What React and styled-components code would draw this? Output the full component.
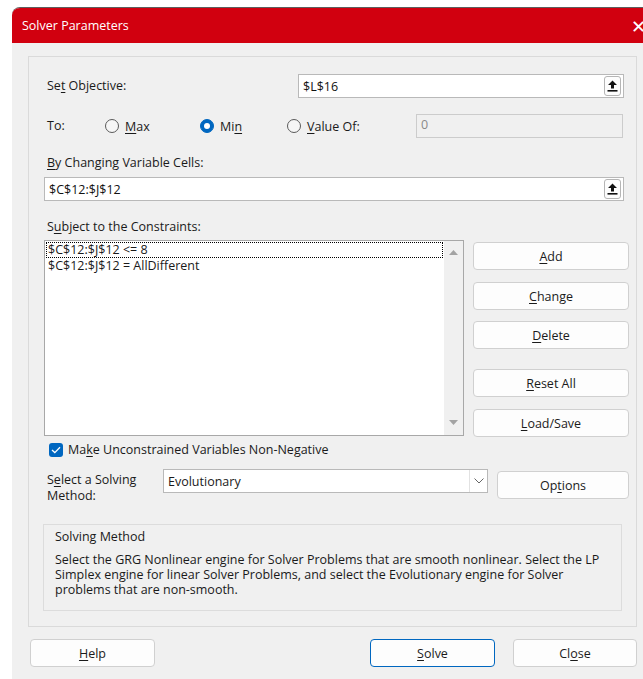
import React from "react";
import styled, { createGlobalStyle, css } from "styled-components";

const Global = createGlobalStyle`
  html, body { margin: 0; padding: 0; background: #ffffff; overflow: hidden; }
  body { font-family: "Open Sans", "Noto Sans", "Liberation Sans", sans-serif; font-size: 12.5px; color: #1a1a1a; }
  * { box-sizing: border-box; }
  u { text-decoration: underline; text-underline-offset: 2px; }
`;

const Page = styled.div`
  padding: 7px 0 0 12px;
  width: 643px;
  height: 679px;
`;

const Window = styled.div`
  width: 660px;
  height: 680px;
  border-top-left-radius: 8px;
  overflow: hidden;
  background: #f0f0f0;
  border-top: 1px solid #5e5e5e;
`;

const TitleBar = styled.div`
  height: 35px;
  background: #d1000f;
  display: flex;
  align-items: center;
  justify-content: space-between;
  padding: 0 10px 0 10px;
  color: #ffffff;
  font-size: 12.5px;
`;

const CloseGlyph = styled.span`
  font-size: 18px;
  font-weight: 300;
  margin-right: 16px;
  color: #ffffff;
`;

const Body = styled.div`
  padding: 13px 0 0 16px;
`;

const Frame = styled.div`
  width: 609px;
  height: 571px;
  border: 1px solid #dadada;
  padding: 0 7px 0 15px;
  display: flex;
  flex-direction: column;
`;

const Row = styled.div`
  display: flex;
  align-items: center;
  margin-top: ${(p) => p.$mt || 0}px;
  height: ${(p) => (p.$h ? `${p.$h}px` : "auto")};
`;

const Label = styled.div`
  padding-left: 3px;
  width: ${(p) => (p.$w ? `${p.$w}px` : "auto")};
  line-height: ${(p) => p.$lh || 16}px;
  padding-top: ${(p) => p.$pt || 0}px;
  flex-shrink: 0;
`;

const TextBox = styled.div`
  width: ${(p) => p.$w}px;
  height: 24px;
  border: 1px solid ${(p) => (p.$disabled ? "#cccccc" : "#b9b9b9")};
  background: ${(p) => (p.$disabled ? "#f0f0f0" : "#ffffff")};
  color: ${(p) => (p.$disabled ? "#8a8a8a" : "#111111")};
  display: flex;
  align-items: center;
  justify-content: space-between;
  padding: 0 2px 0 4px;
  ${(p) => p.$disabled && css`align-items: flex-start; padding-top: 1px;`}
`;

const RefButton = styled.div`
  width: 17px;
  height: 20px;
  border: 1px solid #b5b5b5;
  border-radius: 3px;
  background: #fdfdfd;
  display: flex;
  align-items: center;
  justify-content: center;
`;

const RadioGroup = styled.label`
  display: flex;
  align-items: center;
  gap: 6px;
  width: ${(p) => p.$w}px;
  flex-shrink: 0;
`;

const RadioDot = styled.span`
  width: 14px;
  height: 14px;
  border-radius: 50%;
  border: 1px solid #5a5a5a;
  background: #f6f6f6;
  display: flex;
  align-items: center;
  justify-content: center;
  ${(p) =>
    p.$on &&
    css`
      border-color: #0067c0;
      background: #0067c0;
      &::after {
        content: "";
        width: 6px;
        height: 6px;
        border-radius: 50%;
        background: #ffffff;
      }
    `}
`;

const ListRow = styled.div`
  display: flex;
  margin-top: 5px;
  gap: 9px;
`;

const ListBox = styled.div`
  width: 420px;
  height: 196px;
  border: 1px solid #a8a8a8;
  background: #ffffff;
  display: flex;
`;

const ListItems = styled.div`
  flex: 1;
  padding: 1px 1px 0 1px;
`;

const ListItem = styled.div`
  height: 16px;
  line-height: 14px;
  padding-left: 1px;
  border: 1px ${(p) => (p.$focus ? "dotted #000000" : "solid transparent")};
`;

const ScrollBar = styled.div`
  width: 19px;
  background: #f0f0f0;
  display: flex;
  flex-direction: column;
  justify-content: space-between;
  align-items: center;
  padding: 9px 0 10px;
`;

const ButtonColumn = styled.div`
  display: flex;
  flex-direction: column;
  padding-top: 2px;
`;

const Btn = styled.div`
  width: ${(p) => p.$w || 156}px;
  height: 28px;
  margin-top: ${(p) => p.$mt || 0}px;
  margin-left: ${(p) => p.$ml || 0}px;
  border: 1px solid ${(p) => (p.$primary ? "#0067c0" : "#d0d0d0")};
  border-radius: 4px;
  background: #fdfdfd;
  display: flex;
  align-items: center;
  justify-content: center;
  color: #1b1b1b;
  flex-shrink: 0;
`;

const CheckRow = styled.label`
  display: flex;
  align-items: center;
  gap: 5px;
  margin-top: 5px;
  padding-left: 5px;
  height: 15px;
`;

const CheckBox = styled.span`
  width: 14px;
  height: 14px;
  border-radius: 3px;
  background: #0067c0;
  display: flex;
  align-items: center;
  justify-content: center;
`;

const MethodRow = styled.div`
  display: flex;
  align-items: flex-start;
  margin-top: 12px;
`;

const Select = styled.div`
  width: 325px;
  height: 24px;
  border: 1px solid #b9b9b9;
  background: #ffffff;
  display: flex;
  align-items: center;
  justify-content: space-between;
  padding-left: 4px;
`;

const SelectArrow = styled.div`
  width: 18px;
  height: 22px;
  border-left: 1px solid #e2e2e2;
  display: flex;
  align-items: center;
  justify-content: center;
`;

const GroupBox = styled.div`
  margin: 20px 0 0 -1px;
  width: 579px;
  height: 87px;
  border: 1px solid #dcdcdc;
  padding: 4px 8px 0 11px;
`;

const GroupTitle = styled.div`
  line-height: 16px;
`;

const GroupText = styled.p`
  margin: 7px 0 0;
  line-height: 15px;
`;

const Footer = styled.div`
  display: flex;
  margin-top: 12px;
  padding-left: 2px;
`;

const UpIcon = () => (
  <svg width="11" height="12" viewBox="0 0 11 12">
    <polygon points="5.5,0.5 10,5 7,5 7,8.5 4,8.5 4,5 1,5" fill="#111" />
    <rect x="0.5" y="10" width="10" height="1.6" fill="#111" />
  </svg>
);

const Tri = ({ down }) => (
  <svg width="9" height="5" viewBox="0 0 9 5">
    <polygon points={down ? "0,0 9,0 4.5,5" : "0,5 9,5 4.5,0"} fill="#a3a3a3" />
  </svg>
);

export default function App() {
  return (
    <Page>
      <Global />
      <Window>
        <TitleBar>
          <span>Solver Parameters</span>
          <CloseGlyph>✕</CloseGlyph>
        </TitleBar>
        <Body>
          <Frame>
            <Row $mt={17} $h={24}>
              <Label $w={254}>Se<u>t</u> Objective:</Label>
              <TextBox $w={326}>
                <span>$L$16</span>
                <RefButton><UpIcon /></RefButton>
              </TextBox>
            </Row>

            <Row $mt={16} $h={24}>
              <Label $w={61}>To:</Label>
              <RadioGroup $w={95}>
                <RadioDot />
                <span><u>M</u>ax</span>
              </RadioGroup>
              <RadioGroup $w={87}>
                <RadioDot $on />
                <span>Mi<u>n</u></span>
              </RadioGroup>
              <RadioGroup $w={129}>
                <RadioDot />
                <span><u>V</u>alue Of:</span>
              </RadioGroup>
              <TextBox $w={207} $disabled>
                <span>0</span>
              </TextBox>
            </Row>

            <Row $mt={17}>
              <Label><u>B</u>y Changing Variable Cells:</Label>
            </Row>
            <Row $mt={6} $h={24}>
              <TextBox $w={580}>
                <span>$C$12:$J$12</span>
                <RefButton><UpIcon /></RefButton>
              </TextBox>
            </Row>

            <Row $mt={18}>
              <Label>S<u>u</u>bject to the Constraints:</Label>
            </Row>
            <ListRow>
              <ListBox>
                <ListItems>
                  <ListItem $focus>$C$12:$J$12 &lt;= 8</ListItem>
                  <ListItem>$C$12:$J$12 = AllDifferent</ListItem>
                </ListItems>
                <ScrollBar>
                  <Tri />
                  <Tri down />
                </ScrollBar>
              </ListBox>
              <ButtonColumn>
                <Btn><span><u>A</u>dd</span></Btn>
                <Btn $mt={12}><span><u>C</u>hange</span></Btn>
                <Btn $mt={11}><span><u>D</u>elete</span></Btn>
                <Btn $mt={20}><span><u>R</u>eset All</span></Btn>
                <Btn $mt={12}><span><u>L</u>oad/Save</span></Btn>
              </ButtonColumn>
            </ListRow>

            <CheckRow>
              <CheckBox>
                <svg width="10" height="8" viewBox="0 0 10 8">
                  <polyline points="1,4 3.8,6.6 9,1.2" fill="none" stroke="#fff" strokeWidth="1.3" />
                </svg>
              </CheckBox>
              <span>Ma<u>k</u>e Unconstrained Variables Non-Negative</span>
            </CheckRow>

            <MethodRow>
              <Label $w={119} $lh={16} $pt={3}>
                S<u>e</u>lect a Solving
                <br />
                Method:
              </Label>
              <Select>
                <span>Evolutionary</span>
                <SelectArrow>
                  <svg width="10" height="6" viewBox="0 0 10 6">
                    <polyline points="0.5,0.5 5,5 9.5,0.5" fill="none" stroke="#666" strokeWidth="1" />
                  </svg>
                </SelectArrow>
              </Select>
              <Btn $w={132} $mt={2} $ml={9}>
                <span>Op<u>t</u>ions</span>
              </Btn>
            </MethodRow>

            <GroupBox>
              <GroupTitle>Solving Method</GroupTitle>
              <GroupText>
                Select the GRG Nonlinear engine for Solver Problems that are smooth nonlinear. Select the LP
                Simplex engine for linear Solver Problems, and select the Evolutionary engine for Solver
                problems that are non-smooth.
              </GroupText>
            </GroupBox>
          </Frame>
          <Footer>
            <Btn $w={125}><span><u>H</u>elp</span></Btn>
            <Btn $w={125} $primary $ml={215}><span><u>S</u>olve</span></Btn>
            <Btn $w={124} $ml={18}><span>Cl<u>o</u>se</span></Btn>
          </Footer>
        </Body>
      </Window>
    </Page>
  );
}
